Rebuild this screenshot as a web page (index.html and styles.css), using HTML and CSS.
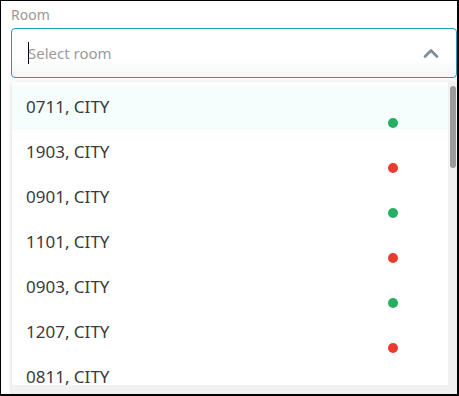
FILE: index.html
```html
<!DOCTYPE html>
<html lang="en">
<head>
    <meta charset="UTF-8">
    <title>Room select</title>
    <link rel="stylesheet" href="styles.css">
</head>
<body>
    <div class="frame">
        <label class="field-label" for="room">Room</label>
        <div class="select-box">
            <span class="caret"></span>
            <input type="text" id="room" placeholder="Select room">
            <svg class="chevron" width="16" height="10" viewBox="0 0 16 10">
                <path d="M2 8.5 L8 2.5 L14 8.5" fill="none" stroke="#7d8d9c" stroke-width="2.6" stroke-linecap="round" stroke-linejoin="round"/>
            </svg>
        </div>

        <div class="dropdown">
            <div class="dropdown-body">
                <ul class="options">
                    <li class="option active"><span>0711, CITY</span><i class="dot free"></i></li>
                    <li class="option"><span>1903, CITY</span><i class="dot busy"></i></li>
                    <li class="option"><span>0901, CITY</span><i class="dot free"></i></li>
                    <li class="option"><span>1101, CITY</span><i class="dot busy"></i></li>
                    <li class="option"><span>0903, CITY</span><i class="dot free"></i></li>
                    <li class="option"><span>1207, CITY</span><i class="dot busy"></i></li>
                    <li class="option"><span>0811, CITY</span><i class="dot free"></i></li>
                </ul>
                <div class="scrollbar"><div class="thumb"></div></div>
            </div>
            <div class="dropdown-foot"></div>
        </div>
    </div>
</body>
</html>
```

FILE: styles.css
```css
* {
    margin: 0;
    padding: 0;
    box-sizing: border-box;
    font-family: 'Noto Sans', 'Open Sans', sans-serif;
}

body {
    background-color: white;
}

.frame {
    width: 459px;
    height: 396px;
    border-style: solid;
    border-color: #000;
    border-width: 1px 2px 2px 1px;
    padding: 4px 0 0 10px;
    overflow: hidden;
}

.field-label {
    display: block;
    font-size: 14px;
    line-height: 20px;
    color: #9b9893;
    height: 23px;
}

.select-box {
    display: flex;
    align-items: center;
    height: 50px;
    border: 1px solid #1f9fb3;
    border-radius: 4px;
    background: linear-gradient(#fff 60%, #f6f6f6);
    padding: 0 17px 0 16px;
}

.caret {
    width: 1px;
    height: 22px;
    background-color: #000;
}

.select-box input {
    flex: 1;
    border: none;
    outline: none;
    background: transparent;
    font-size: 15px;
    color: #333;
    margin-left: -1px;
}

.select-box input::placeholder {
    color: #9a9a9a;
}

.dropdown {
    margin: 4px 0 0 1px;
    height: 312px;
    display: flex;
    flex-direction: column;
    background-color: white;
    box-shadow: 0 1px 5px rgba(0,0,0,0.18);
}

.dropdown-body {
    flex: 1;
    display: flex;
    overflow: hidden;
}

.options {
    flex: 1;
    list-style: none;
    padding-top: 3px;
}

.option {
    display: flex;
    justify-content: space-between;
    height: 45px;
    padding: 0 50px 2px 14px;
    font-size: 17px;
    color: #3a3a3a;
}

.option span {
    align-self: center;
    margin-bottom: 1px;
}

.option.active {
    background-color: #f5fdfd;
}

.dot {
    align-self: flex-end;
    width: 10px;
    height: 10px;
    border-radius: 50%;
}

.dot.free {
    background-color: #27ae60;
}

.dot.busy {
    background-color: #eb3b2f;
}

.scrollbar {
    width: 9px;
    background-color: #f1f1f1;
    padding: 4px 1px 0 2px;
}

.thumb {
    height: 82px;
    border-radius: 3px;
    background-color: #9b9b9b;
}

.dropdown-foot {
    height: 9px;
    background-color: #f1f1f1;
}
```
